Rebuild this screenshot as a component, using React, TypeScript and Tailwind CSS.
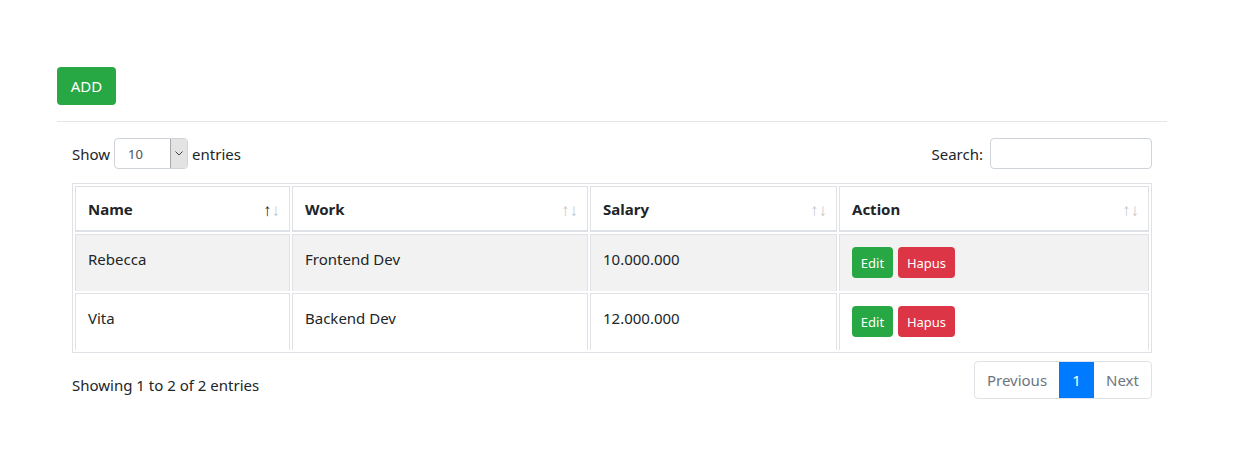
import React from 'react';

const rows = [
    { name: 'Rebecca', work: 'Frontend Dev', salary: '10.000.000' },
    { name: 'Vita', work: 'Backend Dev', salary: '12.000.000' },
];

const SortIcon = ({ active }: { active?: boolean }) => (
    <span className="absolute right-[9px] top-1/2 -translate-y-1/2 flex text-[17px] leading-none font-normal">
        <span className={active ? 'text-[#212529]' : 'text-[#c4c8cc]'}>↑</span>
        <span className="text-[#c4c8cc]">↓</span>
    </span>
);

const App = () => {
    const th = 'relative border-x border-t border-b-2 border-[#dee2e6] px-3 pt-[10px] pb-[9px] text-left font-bold';
    const td = 'border-x border-t border-[#dee2e6] px-3 pt-3 pb-[13px] align-top';

    return (
        <div className="min-h-[476px] bg-white text-[15px] leading-6 text-[#212529]" style={{ fontFamily: '"Noto Sans", "Open Sans", sans-serif' }}>
            <div className="ml-[57px] w-[1110px] pt-[67px]">
                <button className="h-[38px] w-[59px] rounded bg-[#28a745] text-white">ADD</button>
                <hr className="my-4 border-t border-[#e5e5e5]" />

                <div className="px-[15px]">
                    {/* top controls */}
                    <div className="flex items-center justify-between h-[31px]">
                        <div className="flex items-center gap-1">
                            <span>Show</span>
                            <div className="flex h-[31px] w-[74px] items-center rounded border border-[#ced4da] overflow-hidden">
                                <span className="flex-1 pl-[13px] text-[13px] text-[#495057]">10</span>
                                <span className="flex h-full w-[17px] items-center justify-center bg-[#e3e3e3] border-l border-[#a9a9a9]">
                                    <svg width="8" height="5" viewBox="0 0 8 5" fill="none" stroke="#444" strokeWidth="1">
                                        <path d="M0.5 0.5l3.5 3.5 3.5-3.5" />
                                    </svg>
                                </span>
                            </div>
                            <span>entries</span>
                        </div>
                        <div className="flex items-center gap-[7px]">
                            <span>Search:</span>
                            <input className="h-[31px] w-[162px] rounded border border-[#ced4da] px-2 text-sm outline-none" />
                        </div>
                    </div>

                    {/* table */}
                    <table className="mt-[14px] w-full table-fixed border-separate border-spacing-[2px] border border-[#dee2e6]">
                        <colgroup>
                            <col className="w-[215px]" />
                            <col className="w-[296px]" />
                            <col className="w-[247px]" />
                            <col />
                        </colgroup>
                        <thead>
                            <tr>
                                <th className={th}>Name<SortIcon active /></th>
                                <th className={th}>Work<SortIcon /></th>
                                <th className={th}>Salary<SortIcon /></th>
                                <th className={th}>Action<SortIcon /></th>
                            </tr>
                        </thead>
                        <tbody>
                            {rows.map((r, i) => (
                                <tr key={r.name} className={i === 0 ? 'bg-[#f2f2f2]' : ''}>
                                    <td className={td}>{r.name}</td>
                                    <td className={td}>{r.work}</td>
                                    <td className={td}>{r.salary}</td>
                                    <td className={td}>
                                        <div className="flex gap-[5px]">
                                            <button className="h-[31px] w-[41px] rounded bg-[#28a745] text-[13px] text-white">Edit</button>
                                            <button className="h-[31px] w-[57px] rounded bg-[#dc3545] text-[13px] text-white">Hapus</button>
                                        </div>
                                    </td>
                                </tr>
                            ))}
                        </tbody>
                    </table>

                    {/* footer */}
                    <div className="mt-[8px] flex items-start justify-between">
                        <div className="pt-[12px]">Showing 1 to 2 of 2 entries</div>
                        <div className="flex h-[38px] rounded border border-[#dee2e6] overflow-hidden">
                            <span className="flex w-[84px] items-center justify-center text-[#6c757d]">Previous</span>
                            <span className="flex w-[35px] items-center justify-center bg-[#007bff] text-white">1</span>
                            <span className="flex w-[57px] items-center justify-center text-[#6c757d]">Next</span>
                        </div>
                    </div>
                </div>
            </div>
        </div>
    );
};

export default App;
